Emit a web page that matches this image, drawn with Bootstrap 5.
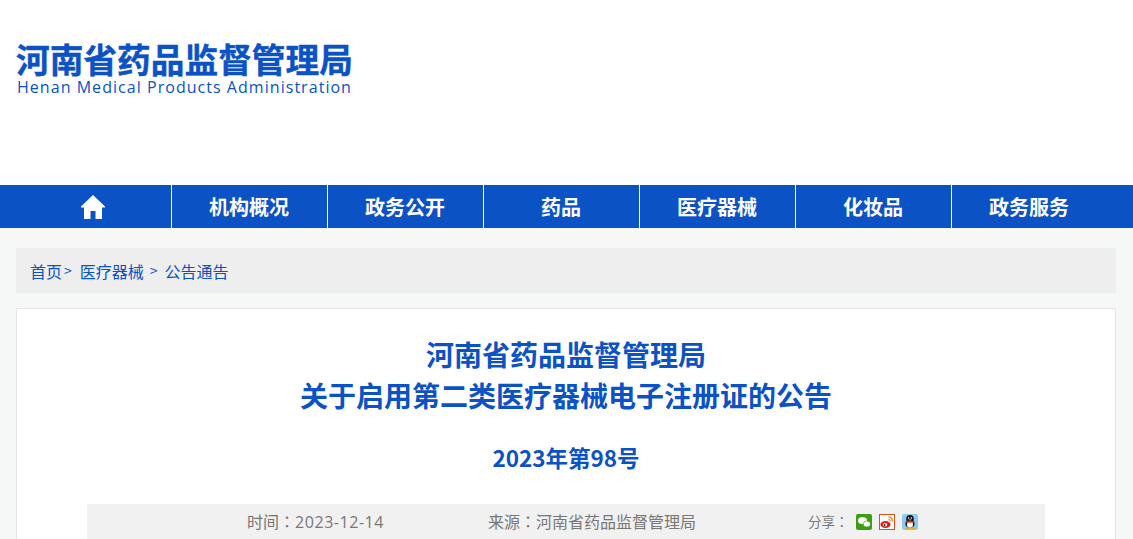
<!doctype html>
<html lang="zh-CN">
<head>
    <meta charset="utf-8">
    <meta name="viewport" content="width=device-width, initial-scale=1">
    <title>河南省药品监督管理局</title>
    <link href="https://cdn.jsdelivr.net/npm/bootstrap@5.3.3/dist/css/bootstrap.min.css" rel="stylesheet">
    <style>
        html, body { height: 100%; overflow: hidden; }
        body {
            background: #f6f8f8;
            font-family: "Noto Sans CJK SC", "Liberation Sans", sans-serif;
            color: #0b52c4;
        }
        .site-head { background: #fff; height: 185px; padding: 41px 0 0 16px; }
        .logo-cn { font-size: 33.7px; font-weight: 700; line-height: 36px; color: #0b52c4; white-space: nowrap; -webkit-text-stroke: 0.4px #0b52c4; }
        .logo-en { font-family: "Open Sans", "Liberation Sans", sans-serif; font-size: 16px; line-height: 20px; color: #0b52c4; letter-spacing: 1.04px; padding-left: 1px; white-space: nowrap; }
        .main-nav { background: #0b52c4; height: 43px; }
        .main-nav a {
            width: 156px; height: 43px; color: #fff; font-size: 20px; font-weight: 700;
            border-left: 1px solid #fff; text-decoration: none; padding-right: 1px;
        }
        .main-nav a:first-child { width: 171px; border-left: 0; padding: 0 0 0 15px; }
        .crumbs {
            margin: 20px 17px 0 16px; height: 45px; background: #eeeeee; padding: 0 0 0 14px;
            font-size: 16px; color: #0b52c4;
        }
        .crumbs a { color: #0b52c4; text-decoration: none; }
        .crumb-sep { font-size: 14px; margin-left: 2px; }
        .crumb-sep-wide { margin-left: 6px; }
        .crumb-last { margin-left: 7px; }
        .article-box {
            margin: 15px 17px 0 16px; background: #fff; border: 1px solid #e6e6e6; height: 400px; padding: 0 70px;
        }
        .article-title { font-size: 28px; font-weight: 700; line-height: 41px; color: #0b52c4; margin: 25px 0 0; }
        .article-no { font-size: 22.5px; font-weight: 700; line-height: 30px; color: #0b52c4; margin: 26px 0 0; }
        .meta-bar { background: #f1f1f1; height: 60px; margin-top: 32px; color: #777; font-size: 16px; padding-top: 5px; }
        .meta-time { margin-left: 160px; width: 241px; }
        .meta-src { width: 320px; }
        .meta-num { font-family: "Open Sans", sans-serif; letter-spacing: 0.55px; }
        .tc-colon { font-family: "Noto Sans CJK TC", sans-serif; }
        .meta-share { font-size: 13.5px; padding-top: 2px; gap: 7px; }
        .share-ico { width: 16px; height: 16px; display: block; margin-top: 3px; }
    </style>
</head>
<body>
    <div class="site-head">
        <div class="logo-cn">河南省药品监督管理局</div>
        <div class="logo-en">Henan Medical Products Administration</div>
    </div>

    <nav class="main-nav d-flex">
        <a href="#" class="d-flex align-items-center justify-content-center" aria-label="首页">
            <svg width="24" height="24" viewBox="0 0 24 24" fill="#fff"><path d="M12 0 L24 11.5 L24 12.5 L21 12.5 L21 24 L14.5 24 L14.5 16 L9.5 16 L9.5 24 L3 24 L3 12.5 L0 12.5 L0 11.5 Z"/></svg>
        </a>
        <a href="#" class="d-flex align-items-center justify-content-center">机构概况</a>
        <a href="#" class="d-flex align-items-center justify-content-center">政务公开</a>
        <a href="#" class="d-flex align-items-center justify-content-center">药品</a>
        <a href="#" class="d-flex align-items-center justify-content-center">医疗器械</a>
        <a href="#" class="d-flex align-items-center justify-content-center">化妆品</a>
        <a href="#" class="d-flex align-items-center justify-content-center">政务服务</a>
    </nav>

    <div class="crumbs d-flex align-items-center">
        <a href="#">首页</a><span class="crumb-sep">&gt;</span>
        <a href="#" class="ms-2">医疗器械</a><span class="crumb-sep crumb-sep-wide">&gt;</span>
        <a href="#" class="crumb-last">公告通告</a>
    </div>

    <div class="article-box text-center">
        <h1 class="article-title">河南省药品监督管理局<br>关于启用第二类医疗器械电子注册证的公告</h1>
        <div class="article-no">2023年第98号</div>
        <div class="meta-bar d-flex text-start">
            <span class="meta-time">时间<span class="tc-colon" lang="zh-TW">：</span><span class="meta-num">2023-12-14</span></span>
            <span class="meta-src">来源<span class="tc-colon" lang="zh-TW">：</span>河南省药品监督管理局</span>
            <span class="meta-share d-flex align-items-start"><span>分享<span class="tc-colon" lang="zh-TW">：</span></span>
                <svg class="share-ico" viewBox="0 0 16 16"><rect width="16" height="16" rx="2" fill="#3f9a14"/><ellipse cx="6.5" cy="6.5" rx="4.5" ry="3.6" fill="#fff"/><ellipse cx="10.8" cy="10" rx="3.6" ry="3" fill="#fff" stroke="#3f9a14" stroke-width=".6"/></svg>
                <svg class="share-ico" viewBox="0 0 16 16"><rect x=".5" y=".5" width="15" height="15" fill="#fff" stroke="#e2501a"/><ellipse cx="6.5" cy="10.5" rx="5" ry="3.6" fill="#d4231c"/><ellipse cx="6" cy="10.8" rx="2.2" ry="1.8" fill="#fff"/><circle cx="5.6" cy="11" r="1" fill="#222"/><path d="M9.5 3 A4 4 0 0 1 13.5 7.5" fill="none" stroke="#f08a1d" stroke-width="1.5"/><path d="M9.5 5.4 A1.8 1.8 0 0 1 11.3 7.5" fill="none" stroke="#f08a1d" stroke-width="1.2"/></svg>
                <svg class="share-ico" viewBox="0 0 16 16"><rect width="16" height="16" rx="2" fill="#8dccf2"/><ellipse cx="8" cy="5" rx="3.8" ry="4" fill="#111"/><ellipse cx="8" cy="10" rx="4.6" ry="4" fill="#111"/><ellipse cx="8" cy="10.5" rx="3" ry="3.2" fill="#fff"/><rect x="3.6" y="7" width="8.8" height="1.6" fill="#d8261c"/><circle cx="6.6" cy="4" r=".8" fill="#fff"/><circle cx="9.4" cy="4" r=".8" fill="#fff"/><rect x="6.6" y="5.4" width="2.8" height="1" fill="#f2a71b"/><ellipse cx="5.3" cy="14.4" rx="2.5" ry="1" fill="#f2a71b"/><ellipse cx="10.7" cy="14.4" rx="2.5" ry="1" fill="#f2a71b"/></svg>
            </span>
        </div>
    </div>

    <script src="https://cdn.jsdelivr.net/npm/bootstrap@5.3.3/dist/js/bootstrap.bundle.min.js"></script>
</body>
</html>
